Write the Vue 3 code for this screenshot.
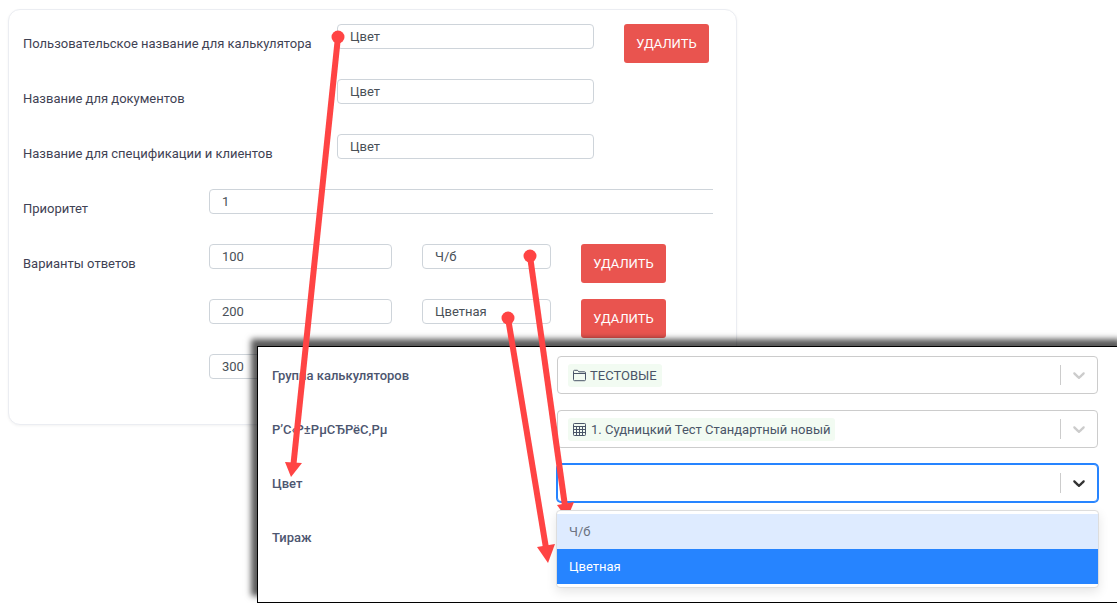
<template>
  <div class="page">
    <div class="card">
      <div v-for="row in nameRows" :key="row.label" class="row">
        <label class="row-label wide">{{ row.label }}</label>
        <input class="field name-field" type="text" readonly :value="row.value">
        <button v-if="row.removable" type="button" class="btn-delete">Удалить</button>
      </div>

      <div class="row clipped">
        <label class="row-label">Приоритет</label>
        <input class="field priority-field" type="text" readonly value="1">
      </div>

      <div v-for="(answer, index) in answers" :key="answer.value" class="row">
        <label class="row-label">{{ index === 0 ? 'Варианты ответов' : '' }}</label>
        <input class="field value-field" type="text" readonly :value="answer.value">
        <input class="field answer-field" type="text" readonly :value="answer.text">
        <button v-if="answer.text" type="button" class="btn-delete">Удалить</button>
      </div>
    </div>

    <div class="shot">
      <div class="shot-row">
        <span class="shot-label">Группа калькуляторов</span>
        <div class="select">
          <div class="select-value">
            <span class="chip">
              <svg class="chip-icon folder" viewBox="0 0 13 13" fill="none" stroke="currentColor" stroke-width="1">
                <path d="M.5 2.300c0-.6.4-1 1-1h3l1.300 1.500h5.700c.6 0 1 .4 1 1v6.900c0 .6-.4 1-1 1h-10c-.6 0-1-.4-1-1z" />
                <path d="M.5 4.500h12" />
              </svg>
              ТЕСТОВЫЕ
            </span>
          </div>
          <span class="select-sep"></span>
          <svg class="select-arrow" viewBox="0 0 20 20"><path :d="chevron" /></svg>
        </div>
      </div>

      <div class="shot-row">
        <span class="shot-label">Р’С‹Р±РµСЂРёС‚Рµ</span>
        <div class="select">
          <div class="select-value">
            <span class="chip">
              <svg class="chip-icon" viewBox="0 0 13 13" fill="none" stroke="currentColor" stroke-width="1">
                <rect x=".5" y=".5" width="12" height="12" rx=".8" />
                <path d="M.5 3.500h12M.5 6.500h12M.5 9.500h12M3.500 3.500v9M6.500 3.500v9M9.500 3.500v9" />
              </svg>
              1. Судницкий Тест Стандартный новый
            </span>
          </div>
          <span class="select-sep"></span>
          <svg class="select-arrow" viewBox="0 0 20 20"><path :d="chevron" /></svg>
        </div>
      </div>

      <div class="shot-row">
        <span class="shot-label">Цвет</span>
        <div class="select focused">
          <div class="select-value"></div>
          <span class="select-sep"></span>
          <svg class="select-arrow" viewBox="0 0 20 20"><path :d="chevron" /></svg>
          <div class="menu">
            <div class="option hovered">Ч/б</div>
            <div class="option selected">Цветная</div>
          </div>
        </div>
      </div>

      <div class="shot-row">
        <span class="shot-label">Тираж</span>
      </div>
    </div>

    <svg class="arrows" viewBox="0 0 1117 609">
      <g v-for="arrow in arrows" :key="arrow.head">
        <circle :cx="arrow.x1" :cy="arrow.y1" r="6.500" />
        <line :x1="arrow.x1" :y1="arrow.y1" :x2="arrow.x2" :y2="arrow.y2" />
        <polygon :points="arrow.head" />
      </g>
    </svg>
  </div>
</template>

<script setup>
const nameRows = [
  { label: 'Пользовательское название для калькулятора', value: 'Цвет', removable: true },
  { label: 'Название для документов', value: 'Цвет', removable: false },
  { label: 'Название для спецификации и клиентов', value: 'Цвет', removable: false }
];

const answers = [
  { value: '100', text: 'Ч/б' },
  { value: '200', text: 'Цветная' },
  { value: '300', text: '' }
];

const chevron = 'M4.516 7.548c0.436-0.446 1.043-0.481 1.576 0l3.908 3.747 3.908-3.747c0.533-0.481 1.141-0.446 1.574 0 0.436 0.445 0.408 1.197 0 1.615-0.406 0.418-4.695 4.502-4.695 4.502-0.217 0.223-0.502 0.335-0.787 0.335s-0.57-0.112-0.789-0.335c0 0-4.287-4.084-4.695-4.502s-0.436-1.17 0-1.615z';

const arrows = [
  { x1: 338, y1: 37, x2: 293.500, y2: 464, head: '285,462 302,463 291,477' },
  { x1: 530, y1: 256, x2: 565, y2: 506, head: '557,505 574,502 567,519' },
  { x1: 508, y1: 318, x2: 546, y2: 548, head: '537,547 555,544 548,563' }
];
</script>

<style>
html,
body {
  margin: 0;
  background: #fff;
  overflow: hidden;
}
</style>

<style scoped>
.page {
  position: relative;
  width: 1117px;
  height: 609px;
  overflow: hidden;
  padding: 9px 0 0 8px;
  box-sizing: border-box;
  font-family: Roboto, "Liberation Sans", sans-serif;
  font-size: 13px;
  color: #3f4254;
}

.card {
  width: 729px;
  height: 416px;
  box-sizing: border-box;
  padding: 14px 23px 0 14px;
  background: #fff;
  border: 1px solid #ebedf2;
  border-radius: 12px;
  box-shadow: 0 1px 3px rgba(0, 0, 0, 0.05);
}

.row {
  display: flex;
  align-items: flex-start;
  height: 39px;
  margin-bottom: 16px;
}

.row.clipped {
  overflow: hidden;
}

.row-label {
  flex: none;
  width: 186px;
  line-height: 39px;
  white-space: nowrap;
}

.row-label.wide {
  width: 314px;
}

.field {
  flex: none;
  height: 25px;
  box-sizing: border-box;
  padding: 0 12px;
  border: 1px solid #ced4da;
  border-radius: 4px;
  background: #fff;
  color: #495057;
  font: inherit;
  outline: none;
}

.name-field {
  width: 257px;
}

.priority-field {
  width: 540px;
}

.value-field {
  width: 183px;
}

.answer-field {
  width: 129px;
  margin-left: 30px;
}

.btn-delete {
  flex: none;
  width: 85px;
  height: 39px;
  margin-left: 30px;
  padding: 0;
  border: 0;
  border-radius: 3px;
  background: #e9544f;
  color: #fff;
  font-family: inherit;
  font-size: 13px;
  text-transform: uppercase;
}

.shot {
  position: absolute;
  left: 257px;
  top: 346px;
  width: 870px;
  height: 257px;
  box-sizing: border-box;
  padding: 9px 0 0 14px;
  background: #fff;
  border: 1px solid #000;
  box-shadow: -6px -7px 6px rgba(0, 0, 0, 0.65);
}

.shot-row {
  display: flex;
  align-items: center;
  height: 38px;
  margin-bottom: 16px;
}

.shot-label {
  flex: none;
  width: 285px;
  font-weight: 500;
  color: #4d5670;
}

.select {
  position: relative;
  display: flex;
  align-items: center;
  flex: none;
  width: 541px;
  height: 38px;
  box-sizing: border-box;
  border: 1px solid #ccc;
  border-radius: 4px;
  background: #fff;
}

.select.focused {
  border-color: #2684ff;
  box-shadow: 0 0 0 1px #2684ff;
}

.select-value {
  flex: 1;
  padding-left: 10px;
}

.chip {
  display: inline-flex;
  align-items: center;
  height: 23px;
  padding: 0 5px;
  border-radius: 3px;
  background: #f2fbf2;
  color: #4a5568;
  white-space: nowrap;
}

.chip-icon {
  width: 13px;
  height: 13px;
  margin-right: 5px;
}

.chip-icon.folder {
  margin-right: 4px;
}

.select-sep {
  width: 1px;
  height: 20px;
  background: #ccc;
}

.select-arrow {
  width: 20px;
  height: 20px;
  margin: 0 8px;
  fill: #ccc;
}

.select.focused .select-arrow {
  fill: #333;
}

.menu {
  position: absolute;
  top: calc(100% + 9px);
  left: -2px;
  right: -2px;
  z-index: 1;
  padding: 3px 0;
  background: #fff;
  border: 1px solid #ddd;
  border-radius: 4px;
  box-shadow: 0 4px 11px rgba(0, 0, 0, 0.1);
}

.option {
  height: 35px;
  padding: 0 12px;
  line-height: 35px;
}

.option.hovered {
  background: #deebff;
  color: #6b7280;
}

.option.selected {
  background: #2684ff;
  color: #fff;
}

.arrows {
  position: absolute;
  left: 0;
  top: 0;
  width: 1117px;
  height: 609px;
  pointer-events: none;
}

.arrows circle,
.arrows polygon {
  fill: #ff4444;
}

.arrows line {
  stroke: #ff4444;
  stroke-width: 6;
}
</style>
